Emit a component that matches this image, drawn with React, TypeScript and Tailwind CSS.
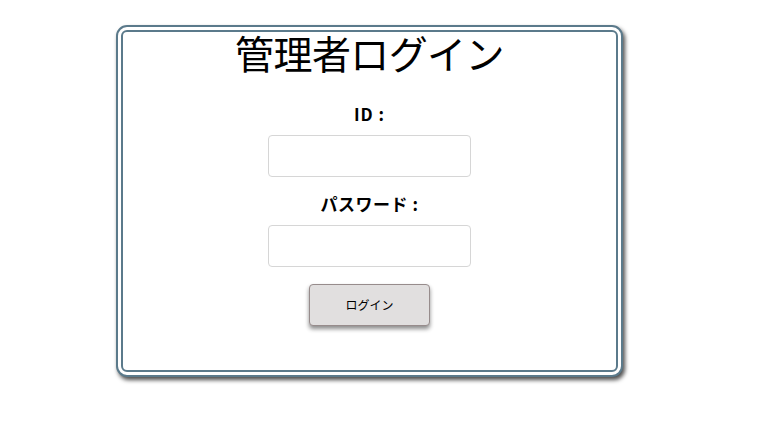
export default function App() {
  const jp = { fontFamily: '"Noto Sans CJK JP", "Noto Sans", sans-serif' };
  return (
    <div className="w-[774px] h-[436px] bg-white" style={jp}>
      <div className="pt-[25px] pl-[116px]">
        <div className="w-[507px] h-[352px] border-[7px] border-double border-[#5b7a8b] rounded-[11px] shadow-[2px_3px_4px_rgba(0,0,0,0.7)] bg-white flex flex-col items-center">
          <h1 className="text-[39px] leading-[40px] text-black font-normal mt-[0px] tracking-[-0.6px]">管理者ログイン</h1>
          <label className="mt-[30px] text-[17px] leading-[24px] font-bold text-black tracking-[1px]">ID :</label>
          <input className="mt-[9px] w-[203px] h-[42px] border border-[#d6d6d6] rounded-[4px] bg-white outline-none" />
          <label className="mt-[15px] text-[17px] leading-[24px] font-bold text-black tracking-[0.5px]">パスワード :</label>
          <input type="password" className="mt-[9px] w-[203px] h-[42px] border border-[#d6d6d6] rounded-[4px] bg-white outline-none" />
          <button className="mt-[17px] w-[121px] h-[42px] bg-[#e1dfdf] border border-[#978c8c] rounded-[4px] text-[12px] text-black shadow-[0_3px_4px_rgba(0,0,0,0.45)]">ログイン</button>
        </div>
      </div>
    </div>
  );
}
